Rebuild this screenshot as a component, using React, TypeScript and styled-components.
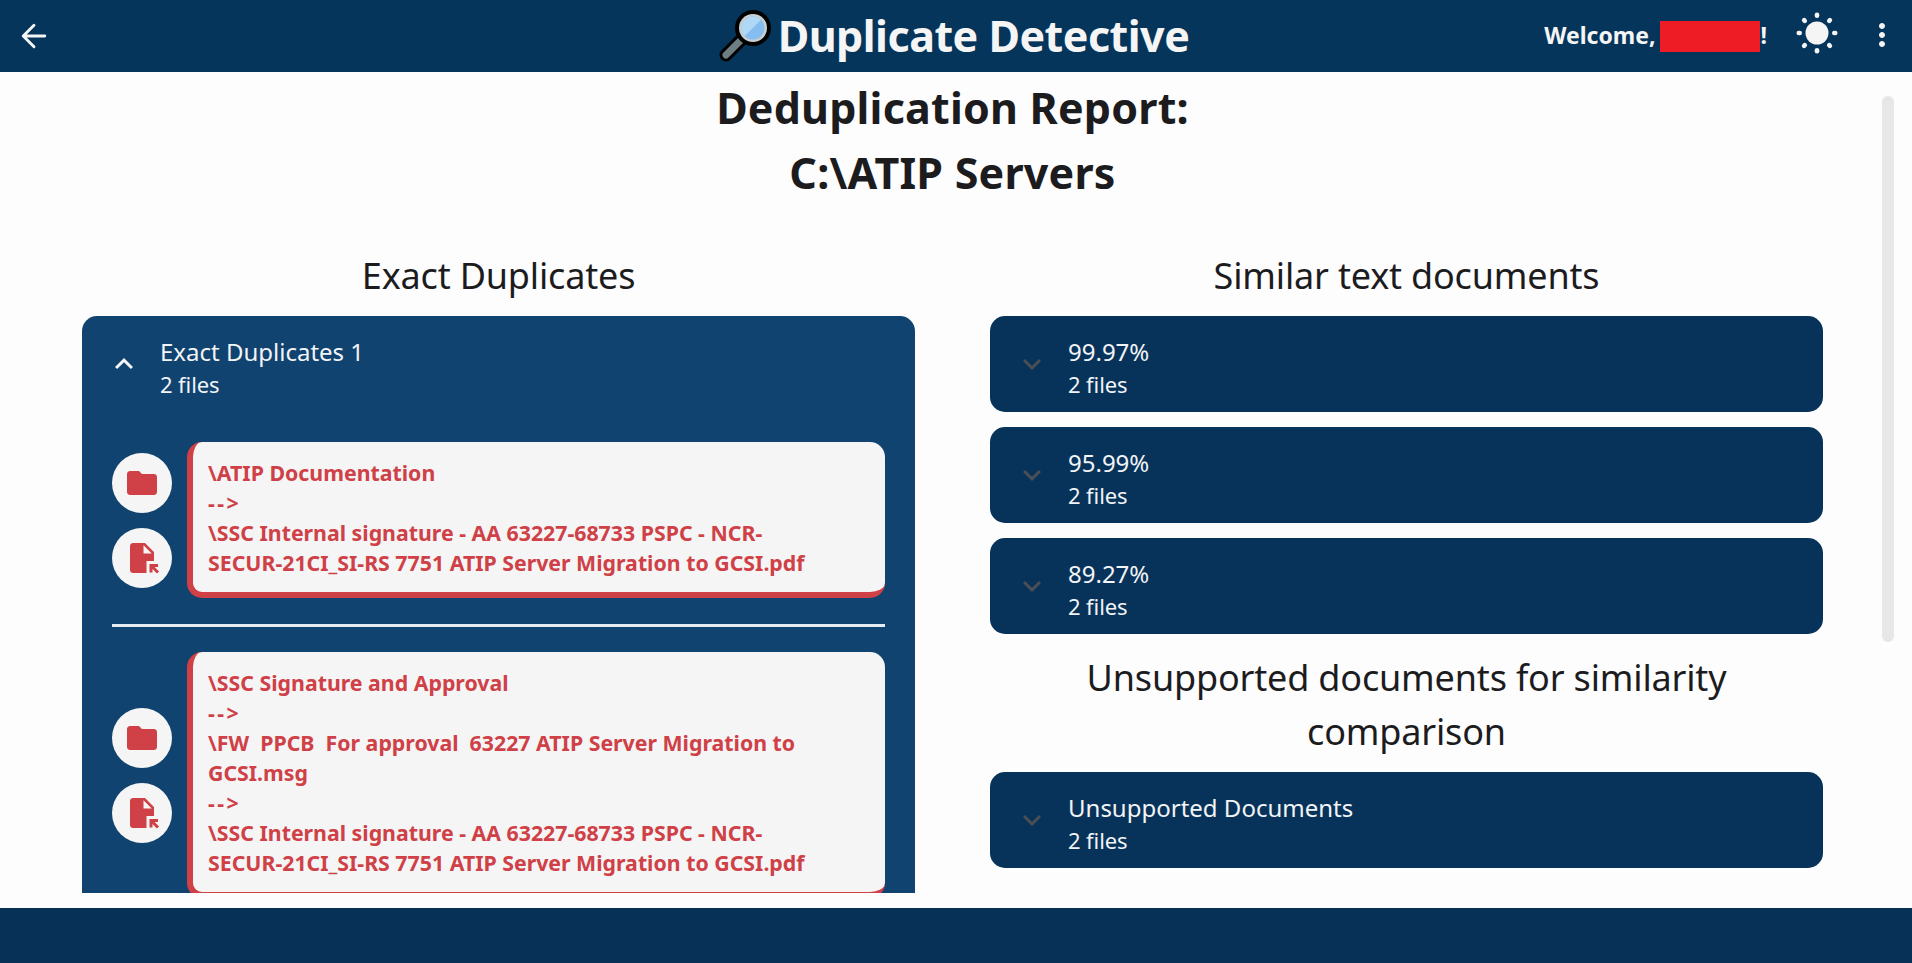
import React from 'react';
import styled, { createGlobalStyle } from 'styled-components';
import { MdFolder, MdFileOpen, MdKeyboardArrowUp, MdKeyboardArrowDown, MdMoreVert } from 'react-icons/md';

const Global = createGlobalStyle`
  html, body { margin: 0; padding: 0; height: 100%; overflow: hidden; background: #fdfdfe; }
  #root { height: 100%; }
  * { box-sizing: border-box; }
`;
const Page = styled.div`
  height: 963px; display: flex; flex-direction: column; position: relative;
  font-family: "Noto Sans", "Open Sans", sans-serif; color: #1c1c1e;
`;
const TopBar = styled.header`
  height: 72px; flex: none; background: #06355c; display: grid; grid-template-columns: 1fr auto 1fr; align-items: center;
  color: #f5f5f5;
`;
const BackButton = styled.div`display: flex; align-items: center; padding-left: 16px; color: #f5f5f5;`;
const Brand = styled.div`display: flex; align-items: center; gap: 5px; height: 72px; margin-left: -4px;`;
const BrandName = styled.span`font-size: 43px; font-weight: 700; letter-spacing: -.5px; line-height: 72px;`;
const TopActions = styled.div`display: flex; align-items: center; justify-content: flex-end; height: 72px; padding-right: 12px;`;
const Welcome = styled.span`font-size: 23px; font-weight: 700; display: flex; align-items: center; position: relative; top: -1px;`;
const Redaction = styled.span`display: inline-block; width: 100px; height: 31px; background: #ee1c25; margin: 3px 1px 0 4px;`;
const SunSlot = styled.div`display: flex; margin: 0 26px 6px 29px;`;
const MoreSlot = styled.div`display: flex; margin-bottom: 2px;`;
const Main = styled.main`flex: 1; min-height: 0; padding: 3px 89px 15px 82px; overflow: hidden; display: flex; flex-direction: column;`;
const Title = styled.h1`margin: 0 0 44px; text-align: center; font-size: 43px; line-height: 65px; font-weight: 700; letter-spacing: .2px;`;
const Columns = styled.div`flex: 1; min-height: 0; display: grid; grid-template-columns: 833px 833px; column-gap: 75px;`;
const Column = styled.section`min-height: 0; overflow: hidden; display: flex; flex-direction: column;`;
const Heading = styled.h2<{ $top?: number }>`
  margin: ${p => p.$top ?? 0}px 0 13px; text-align: center; font-size: 36px; line-height: 54px; font-weight: 400; letter-spacing: -.17px;
`;
const Panel = styled.div<{ $open?: boolean }>`
  flex: none; border-radius: 15px; background: ${p => (p.$open ? '#10436f' : '#07335a')}; color: #f2f4f6;
  & + & { margin-top: 15px; }
  ${p => p.$open && 'border-bottom-left-radius: 0; border-bottom-right-radius: 0;'}
`;
const PanelHead = styled.div`height: 96px; display: flex; align-items: center; padding: 7px 0 0 24px;`;
const Chevron = styled.div<{ $muted?: boolean }>`display: flex; width: 54px; position: relative; top: -4px; color: ${p => (p.$muted ? '#4a4f55' : '#f5f5f5')};`;
const PanelTitle = styled.div`font-size: 24px; line-height: 33px;`;
const PanelSub = styled.div`font-size: 22px; line-height: 32px; letter-spacing: -.1px;`;
const PanelBody = styled.div`padding: 30px 30px 0;`;
const Entry = styled.div`display: flex; align-items: center; gap: 15px;`;
const Actions = styled.div`flex: none; display: flex; flex-direction: column; gap: 15px;`;
const RoundButton = styled.div`width: 60px; height: 60px; border-radius: 50%; background: #f5f5f5; color: #cf4047; display: flex; align-items: center; justify-content: center;`;
const Bubble = styled.div`
  flex: 1; background: #f5f5f5; color: #cf4047; border-left: 6px solid #cf4047; border-bottom: 6px solid #cf4047; border-radius: 15px;
  padding: 16px 15px 14px; font-size: 21.3px; line-height: 30px; font-weight: 700; white-space: pre-wrap; font-variant-ligatures: none;
`;
const Separator = styled.div`letter-spacing: 2.4px;`;
const Rule = styled.hr`height: 3px; border: 0; margin: 26px 0 25px; background: #e6edf2;`;
const Thumb = styled.div`position: absolute; left: 1882px; top: 96px; width: 12px; height: 546px; background: #e7e7e9; border-radius: 6px;`;
const Footer = styled.footer`height: 55px; flex: none; background: #073157;`;

const BackArrow = () => (
  <svg width="36" height="36" viewBox="0 0 24 24" fill="none" stroke="currentColor" strokeWidth="1.9" strokeLinecap="round" strokeLinejoin="round" aria-hidden="true">
    <path d="M19.2 12H5M12 4.8L4.8 12L12 19.2" />
  </svg>
);
const Magnifier = () => (
  <svg width="54" height="52" viewBox="0 0 54 52" aria-hidden="true">
    <path d="M7 45 L24 28" stroke="#000" strokeWidth="13" strokeLinecap="round" />
    <path d="M7 45 L22 30" stroke="#6d7f83" strokeWidth="7" strokeLinecap="round" />
    <circle cx="34" cy="18" r="18" fill="#000" />
    <circle cx="34" cy="18" r="14" fill="#c9ced1" />
    <circle cx="34" cy="18" r="11.5" fill="#85bdee" />
    <path d="M25.8 26.1 A11.5 11.5 0 0 1 42.1 9.8 Z" fill="#aed8f6" />
  </svg>
);
const Sun = () => (
  <svg width="42" height="42" viewBox="0 0 42 42" fill="#f5f5f5" aria-hidden="true">
    <circle cx="21" cy="21" r="11.5" />
    {[0, 45, 90, 135, 180, 225, 270, 315].map(a => (
      <rect key={a} x="18.7" y="0.5" width="4.6" height="5.5" rx="2.3" transform={`rotate(${a} 21 21)`} />
    ))}
  </svg>
);

const Item = ({ lines }: { lines: string[] }) => (
  <Entry>
    <Actions>
      <RoundButton><MdFolder size={36} /></RoundButton>
      <RoundButton><MdFileOpen size={36} /></RoundButton>
    </Actions>
    <Bubble>{lines.map((l, i) => (l === '-->' ? <Separator key={i}>{l}</Separator> : <div key={i}>{l}</div>))}</Bubble>
  </Entry>
);
const Collapsed = ({ title }: { title: string }) => (
  <Panel>
    <PanelHead>
      <Chevron $muted><MdKeyboardArrowDown size={36} /></Chevron>
      <div><PanelTitle>{title}</PanelTitle><PanelSub>2 files</PanelSub></div>
    </PanelHead>
  </Panel>
);

export default function App() {
  return (
    <Page>
      <Global />
      <TopBar>
        <BackButton><BackArrow /></BackButton>
        <Brand><Magnifier /><BrandName>Duplicate Detective</BrandName></Brand>
        <TopActions>
          <Welcome>Welcome,<Redaction />!</Welcome>
          <SunSlot><Sun /></SunSlot>
          <MoreSlot><MdMoreVert size={36} /></MoreSlot>
        </TopActions>
      </TopBar>
      <Main>
        <Title>Deduplication Report:<br />C:\ATIP Servers</Title>
        <Columns>
          <Column>
            <Heading>Exact Duplicates</Heading>
            <Panel $open>
              <PanelHead>
                <Chevron><MdKeyboardArrowUp size={36} /></Chevron>
                <div><PanelTitle>Exact Duplicates 1</PanelTitle><PanelSub>2 files</PanelSub></div>
              </PanelHead>
              <PanelBody>
                <Item lines={['\\ATIP Documentation', '-->', '\\SSC Internal signature - AA 63227-68733 PSPC - NCR-', 'SECUR-21CI_SI-RS 7751 ATIP Server Migration to GCSI.pdf']} />
                <Rule />
                <Item lines={['\\SSC Signature and Approval', '-->', '\\FW  PPCB  For approval  63227 ATIP Server Migration to', 'GCSI.msg', '-->', '\\SSC Internal signature - AA 63227-68733 PSPC - NCR-', 'SECUR-21CI_SI-RS 7751 ATIP Server Migration to GCSI.pdf']} />
              </PanelBody>
            </Panel>
          </Column>
          <Column>
            <Heading>Similar text documents</Heading>
            <Collapsed title="99.97%" />
            <Collapsed title="95.99%" />
            <Collapsed title="89.27%" />
            <Heading $top={17}>Unsupported documents for similarity<br />comparison</Heading>
            <Collapsed title="Unsupported Documents" />
          </Column>
        </Columns>
      </Main>
      <Thumb />
      <Footer />
    </Page>
  );
}
